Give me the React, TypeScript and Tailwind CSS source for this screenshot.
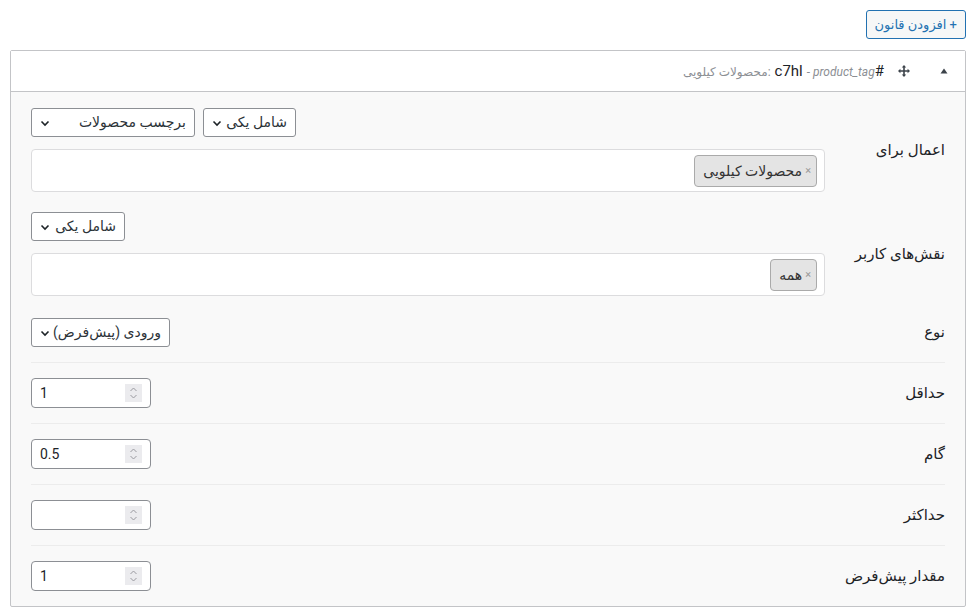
import React from 'react';

const font = { fontFamily: "Roboto, 'DejaVu Sans', sans-serif" };

function Chevron() {
  return (
    <svg width="10" height="10" viewBox="0 0 10 10" className="shrink-0">
      <path d="M1.5 3.5 L5 7 L8.5 3.5" fill="none" stroke="#1d2327" strokeWidth="1.6" />
    </svg>
  );
}

function Select({ label, width }: { label: string; width: string }) {
  return (
    <div
      className={`flex h-[29px] items-center justify-between rounded-[3px] border border-[#8c8f94] bg-white pl-[8px] pr-[8px] text-[14px] text-[#2c3338] ${width}`}
    >
      <span>{label}</span>
      <Chevron />
    </div>
  );
}

function Tag({ label }: { label: string }) {
  return (
    <div className="flex h-[32px] items-center gap-[3px] rounded-[4px] border border-[#aaa] bg-[#e4e4e4] pl-[8px] pr-[5px] text-[14px] text-[#333]">
      <span className="text-[11px] text-[#999]">×</span>
      <span>{label}</span>
    </div>
  );
}

function TagBox({ label }: { label: string }) {
  return (
    <div className="mt-[12px] flex h-[43px] items-start rounded-[4px] border border-[#dcdcde] bg-white pr-[7px] pt-[5px]">
      <Tag label={label} />
    </div>
  );
}

function NumberInput({ value }: { value: string }) {
  return (
    <div dir="ltr" className="flex h-[30px] w-[120px] items-center justify-between rounded-[4px] border border-[#8c8f94] bg-white pl-[8px] pr-[8px] text-[14px] text-[#1d2327]">
      <span>{value}</span>
      <div className="flex h-[18px] w-[17px] flex-col items-center justify-center bg-[#ebebee]">
        <svg width="9" height="14" viewBox="0 0 9 14">
          <path d="M1.5 5 L4.5 2 L7.5 5" fill="none" stroke="#9a9aa0" strokeWidth="1" />
          <path d="M1.5 9 L4.5 12 L7.5 9" fill="none" stroke="#9a9aa0" strokeWidth="1" />
        </svg>
      </div>
    </div>
  );
}

function Label({ children }: { children: React.ReactNode }) {
  return <div className="w-[120px] shrink-0 text-[15px] text-[#1d2327]">{children}</div>;
}

function NumberRow({ label, value, last }: { label: string; value: string; last?: boolean }) {
  return (
    <div className={`flex items-center py-[15px] ${last ? '' : 'border-b border-[#ececec]'}`}>
      <Label>{label}</Label>
      <div className="flex flex-1 justify-end">
        <NumberInput value={value} />
      </div>
    </div>
  );
}

export default function App() {
  return (
    <div dir="rtl" style={font} className="h-[616px] w-[976px] bg-white px-[10px] pt-[10px]">
      <div className="flex">
        <button className="h-[29px] rounded-[3px] border border-[#2271b1] bg-[#f6f7f7] px-[8px] text-[13px] text-[#2271b1]">
          + افزودن قانون
        </button>
      </div>

      <div className="mt-[11px] rounded-[2px] border border-[#c3c4c7] bg-[#f9f9f9]">
        {/* header */}
        <div className="flex h-[41px] items-center border-b border-[#c3c4c7] bg-white pr-[17px]">
          <svg width="8" height="6" viewBox="0 0 8 6" className="shrink-0">
            <path d="M4 0.5 L7.5 5.5 L0.5 5.5 Z" fill="#3c434a" />
          </svg>
          <svg width="12" height="12" viewBox="0 0 12 12" className="mr-[30px] shrink-0">
            <path
              d="M6 0 L8.2 2.4 H6.8 V5.2 H9.6 V3.8 L12 6 L9.6 8.2 V6.8 H6.8 V9.6 H8.2 L6 12 L3.8 9.6 H5.2 V6.8 H2.4 V8.2 L0 6 L2.4 3.8 V5.2 H5.2 V2.4 H3.8 Z"
              fill="#3c434a"
            />
          </svg>
          <div dir="ltr" className="mr-[14px] flex items-baseline text-[12px] text-[#8c8f94]">
            <span>محصولات کیلویی</span>
            <span>:</span>
            <span className="ml-[4px] text-[15px] text-[#1d2327]">c7hl</span>
            <span className="ml-[4px] italic">- product_tag</span>
            <span className="text-[15px] text-[#1d2327]">#</span>
          </div>
        </div>

        {/* body */}
        <div className="pl-[20px] pr-[20px] pt-[16px]">
          <div className="flex items-center">
            <Label>اعمال برای</Label>
            <div className="flex-1">
              <div className="flex justify-end gap-[8px]">
                <Select label="شامل یکی" width="w-[93px]" />
                <Select label="برچسب محصولات" width="w-[164px]" />
              </div>
              <TagBox label="محصولات کیلویی" />
            </div>
          </div>

          <div className="mt-[20px] flex items-center">
            <Label>نقش‌های کاربر</Label>
            <div className="flex-1">
              <div className="flex justify-end">
                <Select label="شامل یکی" width="w-[94px]" />
              </div>
              <TagBox label="همه" />
            </div>
          </div>

          <div className="mt-[22px] flex items-center border-b border-[#ececec] pb-[15px]">
            <Label>نوع</Label>
            <div className="flex flex-1 justify-end">
              <Select label="ورودی (پیش‌فرض)" width="w-[139px]" />
            </div>
          </div>

          <NumberRow label="حداقل" value="1" />
          <NumberRow label="گام" value="0.5" />
          <NumberRow label="حداکثر" value="" />
          <NumberRow label="مقدار پیش‌فرض" value="1" last />
        </div>
      </div>
    </div>
  );
}
